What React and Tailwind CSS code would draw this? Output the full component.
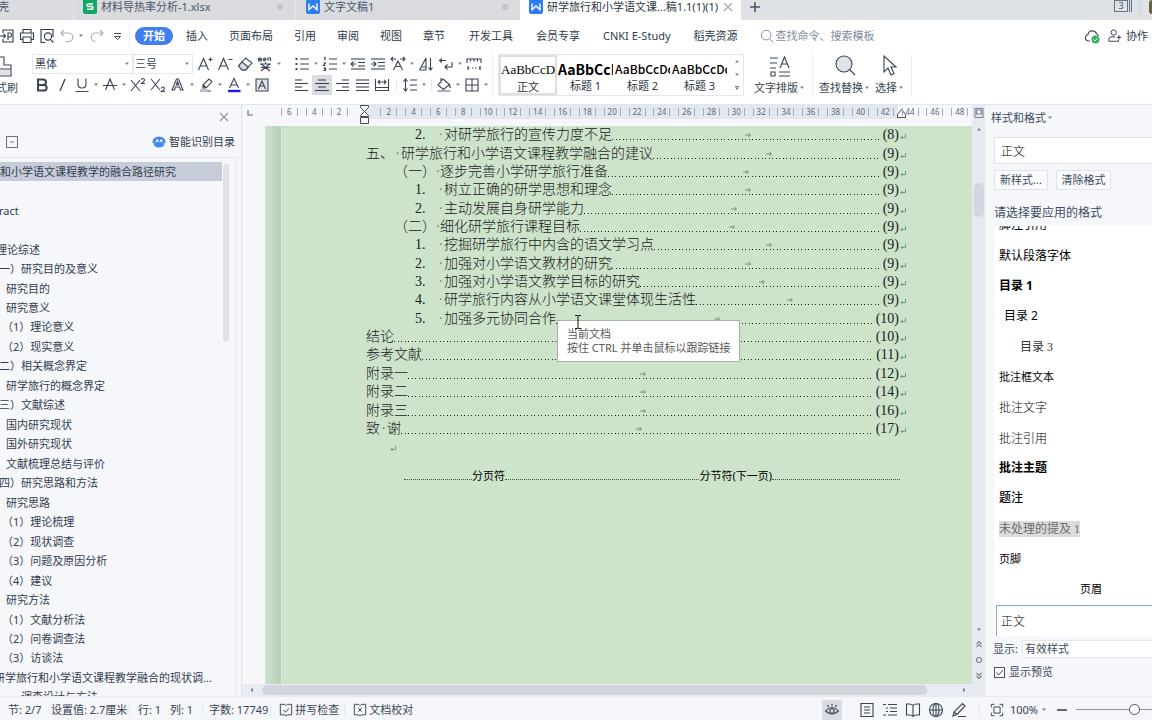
import React, { useState } from 'react';

const menus = ['插入', '页面布局', '引用', '审阅', '视图', '章节'];
const extraMenus = ['开发工具', '会员专享', 'CNKI E-Study', '稻壳资源'];

const outline = [
    { text: '行和小学语文课程教学的融合路径研究', indent: '-ml-[11px]', active: true },
    { text: '', indent: '' },
    { text: 'ract', indent: '-ml-px' },
    { text: '', indent: '' },
    { text: '理论综述', indent: '-ml-1' },
    { text: '一）研究目的及意义', indent: '-ml-px' },
    { text: '研究目的', indent: 'ml-1.5' },
    { text: '研究意义', indent: 'ml-1.5' },
    { text: '（1）理论意义', indent: 'ml-0.5' },
    { text: '（2）现实意义', indent: 'ml-0.5' },
    { text: '二）相关概念界定', indent: '-ml-px' },
    { text: '研学旅行的概念界定', indent: 'ml-1.5' },
    { text: '三）文献综述', indent: '-ml-px' },
    { text: '国内研究现状', indent: 'ml-1.5' },
    { text: '国外研究现状', indent: 'ml-1.5' },
    { text: '文献梳理总结与评价', indent: 'ml-1.5' },
    { text: '四）研究思路和方法', indent: '-ml-px' },
    { text: '研究思路', indent: 'ml-1.5' },
    { text: '（1）理论梳理', indent: 'ml-0.5' },
    { text: '（2）现状调查', indent: 'ml-0.5' },
    { text: '（3）问题及原因分析', indent: 'ml-0.5' },
    { text: '（4）建议', indent: 'ml-0.5' },
    { text: '研究方法', indent: 'ml-1.5' },
    { text: '（1）文献分析法', indent: 'ml-0.5' },
    { text: '（2）问卷调查法', indent: 'ml-0.5' },
    { text: '（3）访谈法', indent: 'ml-0.5' },
    { text: '研学旅行和小学语文课程教学融合的现状调...', indent: '-ml-1.5' },
    { text: '、调查设计与方法', indent: 'ml-2.5' },
];

const toc = [
    { level: 2, num: '2.', text: '对研学旅行的宣传力度不足', page: 8 },
    { level: 0, num: '五、', text: '研学旅行和小学语文课程教学融合的建议', page: 9 },
    { level: 1, num: '（一）', text: '逐步完善小学研学旅行准备', page: 9 },
    { level: 2, num: '1.', text: '树立正确的研学思想和理念', page: 9 },
    { level: 2, num: '2.', text: '主动发展自身研学能力', page: 9 },
    { level: 1, num: '（二）', text: '细化研学旅行课程目标', page: 9 },
    { level: 2, num: '1.', text: '挖掘研学旅行中内含的语文学习点', page: 9 },
    { level: 2, num: '2.', text: '加强对小学语文教材的研究', page: 9 },
    { level: 2, num: '3.', text: '加强对小学语文教学目标的研究', page: 9 },
    { level: 2, num: '4.', text: '研学旅行内容从小学语文课堂体现生活性', page: 9 },
    { level: 2, num: '5.', text: '加强多元协同合作', page: 10 },
    { level: 0, text: '结论', page: 10 },
    { level: 0, text: '参考文献', page: 11 },
    { level: 0, text: '附录一', page: 12 },
    { level: 0, text: '附录二', page: 14 },
    { level: 0, text: '附录三', page: 16 },
    { level: 0, num: '致', text: '谢', page: 17 },
];

const levelIndent = ['', 'pl-7', 'pl-[49px]'];
const levelNum = ['', '', 'w-[22px]'];
const levelDot = ['w-[7px]', 'w-1', 'w-[7px]'];

const styles = [
    { name: '脚注引用', look: 'ml-[5px] text-xs' },
    { name: '默认段落字体', look: 'ml-[5px] text-xs' },
    { name: '目录 1', look: 'ml-[5px] text-xs font-bold' },
    { name: '目录 2', look: 'ml-2.5 text-xs' },
    { name: '目录 3', look: "ml-[26px] text-xs text-[#333] font-['Liberation_Serif','Noto_Sans_CJK_SC',serif]" },
    { name: '批注框文本', look: 'ml-[5px] text-[11px]' },
    { name: '批注文字', look: "ml-[5px] text-xs font-light font-['Noto_Sans_CJK_SC',sans-serif]" },
    { name: '批注引用', look: "ml-[5px] text-xs font-light font-['Noto_Sans_CJK_SC',sans-serif]" },
    { name: '批注主题', look: 'ml-[5px] text-xs font-bold' },
    { name: '题注', look: 'ml-[5px] text-xs font-medium' },
    { name: '未处理的提及 1', look: "ml-[5px] text-xs text-[#6b6b6b] bg-[#dcdcdc] font-['Liberation_Serif','Noto_Sans_CJK_SC',serif]" },
    { name: '页脚', look: 'ml-[5px] text-[11px]' },
    { name: '页眉', look: 'ml-[86px] text-[11px]' },
];

const rulerMarks = [6, 4, 2, 0];
for (let i = 2; i <= 48; i += 2) {
    rulerMarks.push(i);
}

const Svg = ({ children, className = 'size-4', box = '0 0 16 16' }) => (
    <svg className={`${className} shrink-0`} viewBox={box} fill="none" stroke="currentColor" strokeWidth="1.1" aria-hidden="true">{children}</svg>
);

const Caret = () => (
    <svg className="w-2 h-1 shrink-0" viewBox="0 0 8 4" fill="#7a828f" aria-hidden="true"><path d="M2 0.5h4L4 3z" /></svg>
);

const Tool = ({ label, children, caret, active }) => (
    <button aria-label={label} title={label} className="flex items-center h-5">
        <span className={active ? 'flex w-5 h-5 items-center justify-center bg-[#d9dde3]' : 'flex w-5 h-5 items-center justify-center'}>
            <Svg>{children}</Svg>
        </span>
        {caret && <Caret />}
    </button>
);

const WLogo = () => (
    <svg className="size-3.5 shrink-0" viewBox="0 0 14 14" aria-hidden="true">
        <path d="M0 0h14v12.5L12.5 14H1.5L0 12.5z" fill="#2f7df0" />
        <path d="M3 3.5v6.2L7 6l4 3.700V3.500" fill="none" stroke="#fff" strokeWidth="1.400" />
    </svg>
);

const Sep = () => <span className="w-px h-3 bg-[#e3e6ea]" />;

const TabBar = () => (
    <div className="flex h-5 bg-[#dfe2e4] text-[#4b5568] leading-[14px] shrink-0">
        <button className="w-[74px] pb-1 text-left bg-[#d9dbdf] border-r border-[#e6e8eb] flex items-start overflow-hidden"><span className="-ml-0.5">壳</span></button>
        <button className="w-[222px] pl-[9px] pr-3 flex items-start bg-[#d9dbdf] border-r border-[#e6e8eb]">
            <svg className="size-3.5 shrink-0" viewBox="0 0 14 14" aria-hidden="true">
                <path d="M0 0h14v12.500L12.500 14H1.500L0 12.500z" fill="#13a765" />
                <path d="M10 4H5.200Q4 4 4 5.200T5.200 6.500H9Q10 6.500 10 7.700T9 9.300H4" fill="none" stroke="#fff" strokeWidth="1.500" />
            </svg>
            <span className="ml-1">材料导热率分析-1.xlsx</span>
            <span className="ml-auto mt-1 size-1.5 rounded-full bg-[#bfc3ca]" />
        </button>
        <button className="w-[224px] pl-[10px] pr-3 flex items-start bg-[#d9dbdf]">
            <WLogo />
            <span className="ml-1">文字文稿1</span>
            <span className="ml-auto mt-1 size-1.5 rounded-full bg-[#bfc3ca]" />
        </button>
        <div className="w-[221px] pl-[9px] pr-2 flex items-start bg-white text-[#2c3645]">
            <WLogo />
            <span className="ml-1 whitespace-nowrap">研学旅行和小学语文课...稿1.1(1)(1)</span>
            <button aria-label="关闭标签" className="ml-auto mt-0.5 text-[#a3a8b0]">
                <Svg className="size-2.5" box="0 0 10 10"><path d="M1 1l8 8M9 1L1 9" /></Svg>
            </button>
        </div>
        <button aria-label="新建标签" className="ml-2 h-3.5 text-[#4b5670]">
            <Svg className="size-3" box="0 0 12 12"><path d="M6 1v10M1 6h10" strokeWidth="1.600" /></Svg>
        </button>
        <div className="ml-auto flex h-4 items-start overflow-hidden">
            <span className="w-3.5 h-3 border border-[#66708a] text-[9px] leading-[10px] text-center">3</span>
            <span className="w-0.5 h-3 border-r border-[#66708a]" />
            <span className="w-0.5 h-3 border-r border-[#66708a]" />
            <span className="ml-2 w-px h-4 bg-[#cfd2d6]" />
            <span className="ml-2 w-[3px] h-3.5 rounded-l-full bg-[#6a6248]" />
        </div>
    </div>
);

const MenuRow = () => (
    <div className="flex h-8 items-center text-[#2f3a4a]">
        <button aria-label="输出" className="w-[17px]">
            <Svg className="size-3.5" box="0 0 14 14"><path d="M3 4V1h10v12H3v-3M0 7h5M3.500 5l2 2-2 2M8 11V4h2q1.500 0 1.500 2T10 8H8" /></Svg>
        </button>
        <Tool label="打印"><path d="M4 5V1.500h8V5M4 11.500H1.500V5h13v6.500H12M4 9h8v5.500H4zM12 7h1" /></Tool>
        <Tool label="打印预览"><path d="M6 14.500H2v-13h12V9M14.500 14.500l-2.600-2.600" /><circle cx="9" cy="8.500" r="3.600" /></Tool>
        <button aria-label="撤销" className="flex items-center w-7 ml-0.5 text-[#a9afb8]">
            <Svg><path d="M5 2L2 5l3 3M2 5h7.500a4.200 4.200 0 010 8.500H6" /></Svg>
            <span className="ml-0.5 flex"><Caret /></span>
        </button>
        <button aria-label="恢复" className="flex w-5 justify-center text-[#a9afb8]">
            <Svg><path d="M11 2l3 3-3 3M14 5H6.500a4.200 4.200 0 000 8.500" /></Svg>
        </button>
        <Tool label="更多"><path d="M5 5.500h7M5.500 8.500h6l-3 3z" strokeWidth=".9" /></Tool>
        <span className="ml-0.5 w-px h-5 bg-[#e8eaed]" />
        <button className="ml-[5px] w-[38px] h-[18px] rounded-full bg-[#417ff0] text-white font-bold leading-[18px]">开始</button>
        <div className="ml-[13px] flex gap-[21px]">
            {menus.map(menu => <button key={menu}>{menu}</button>)}
        </div>
        <div className="ml-6 flex gap-[23px]">
            {extraMenus.map(menu => <button key={menu}>{menu}</button>)}
        </div>
        <label className="ml-[22px] flex flex-1 items-center gap-0.5 text-[#838ba0]">
            <Svg className="size-3.5"><circle cx="7" cy="7" r="5.500" /><path d="M11 11l4 4" /></Svg>
            <input aria-label="查找命令" className="w-40 outline-none placeholder:text-[#838ba0]" placeholder="查找命令、搜索模板" />
        </label>
        <button aria-label="已同步" className="mr-2">
            <svg className="size-4" viewBox="0 0 16 16" fill="none" aria-hidden="true">
                <path d="M6 13H4.500a3.300 3.300 0 01-.5-6.500 4.500 4.500 0 018.700-.5 3 3 0 011.800 2" stroke="#4a5463" strokeWidth="1.200" />
                <circle cx="11.500" cy="11.500" r="4" fill="#35b558" />
                <path d="M9.500 11.500l1.500 1.500 2.500-2.700" stroke="#fff" />
            </svg>
        </button>
        <button className="flex items-center gap-1 pr-1">
            <Svg className="size-3.5"><circle cx="6.500" cy="4" r="3" /><path d="M12 12.500V14H1v-2.500q0-2.500 2.500-2.500H8M12.500 7v5M10 9.500h5" /></Svg>
            <span>协作</span>
        </button>
    </div>
);

const lines = (rows) => rows.map(([x, y, w]) => <path key={y} d={`M${x} ${y}h${w}`} />);

const BigTool = ({ label, children }) => (
    <button className="flex flex-col items-center gap-0.5">
        <Svg className="size-6" box="0 0 24 24">{children}</Svg>
        <span className="flex items-center whitespace-nowrap">{label}<Caret /></span>
    </button>
);

const Gallery = () => (
    <div className="ml-[5px] flex w-[246px] h-[42px] border border-[#e4e6e9] text-black">
        {[
            ['正文', "text-[13px] font-['Liberation_Serif',serif]", true],
            ['标题 1', "text-[14px] font-bold font-['Noto_Sans_CJK_SC',sans-serif]", false],
            ['标题 2', "text-xs font-medium font-['Noto_Sans_CJK_SC',sans-serif]", false],
            ['标题 3', "text-xs font-medium font-['Noto_Sans_CJK_SC',sans-serif]", false],
        ].map(([name, look, on]) => (
            <button key={name} className={on ? 'w-[58px] border-2 border-[#dcdfe3] overflow-hidden' : 'w-[57px] border border-transparent overflow-hidden'}>
                <span className={`${look} block h-[22px] leading-[26px] whitespace-nowrap text-left`}>AaBbCcDd</span>
                <span className="block leading-4 text-[#2c3645]">{name}</span>
            </button>
        ))}
        <div className="ml-auto w-3 flex flex-col justify-between items-center py-1">
            <button aria-label="上一行" className="rotate-180"><Caret /></button>
            <button aria-label="下一行"><Caret /></button>
            <button aria-label="更多样式" className="flex flex-col"><span className="mx-0.5 h-px bg-[#7a828f]" /><Caret /></button>
        </div>
    </div>
);

const Ribbon = () => (
    <div className="flex h-[52px] pt-[2px] text-[#3a4454]">
        <button className="w-[32px] flex flex-col items-start gap-0.5 overflow-hidden">
            <Svg className="w-3 h-6" box="0 0 12 24"><path d="M0 3h4v8h7v4H0M11 15v7H0" /><path d="M0 16h10v5H0z" fill="#dfe2e7" stroke="none" /></Svg>
            <span className="-ml-1 whitespace-nowrap">式刷</span>
        </button>
        <div className="flex flex-col gap-px">
            <div className="flex items-center">
                <select aria-label="字体" className="appearance-none w-[101px] h-5 px-0.5 border border-[#e6e8eb] outline-none"><option>黑体</option></select>
                <span className="-ml-2.5 mr-0.5 flex"><Caret /></span>
                <select aria-label="字号" className="appearance-none w-[60px] h-5 px-px border border-[#e6e8eb] outline-none"><option>三号</option></select>
                <span className="-ml-2.5 mr-1 flex"><Caret /></span>
                <Tool label="增大字号"><path d="M1.500 14L6.500 2.500l5 11.500M3.200 10h6.600M11.500 3.500h4M13.500 1.500v4" /></Tool>
                <Tool label="减小字号"><path d="M1.500 14L6.500 2.500l5 11.500M3.200 10h6.600M11.500 3.500h4" /></Tool>
                <Tool label="清除格式"><path d="M8.500 2L15 7l-6.500 7H5L1.500 10z" /><path d="M5 6l6.300 5L8.500 14H5L1.500 10z" fill="#d5d9df" /></Tool>
                <Tool label="拼音指南" caret><path d="M1 2l1 3 1-3 1 3 1-3M6.500 3.500h2.500Q9 2 7.800 2T6.500 3.500 8 5h1M11 5V2h2.500v3M3 8h11M8.500 6.500V8M4 8l9 7M13 8l-9 7M4 11.500h9" /></Tool>
            </div>
            <div className="flex items-center">
                <Tool label="加粗"><path d="M4 2.500h5q3 0 3 2.700T9 8H4zM4 8h5.500q3.200 0 3.200 2.800T9.500 13.500H4z" strokeWidth="2" /></Tool>
                <Tool label="倾斜"><path d="M11 2L6 14" strokeWidth="1.300" /></Tool>
                <Tool label="下划线" caret><path d="M4 1.500V7q0 4 4 4t4-4V1.500M1.500 14.500h13" /></Tool>
                <Tool label="删除线" caret><path d="M3.500 13L8 2l4.500 11M1 8.500h14" /></Tool>
                <Tool label="上标"><path d="M1 3l9 11M10 3L1 14M11.500 3q0-1.500 1.500-1.500t1.500 1.500q0 1-3 3.500h3.500" /></Tool>
                <Tool label="下标"><path d="M1 2l9 11M10 2L1 13M11.500 11.500q0-1.500 1.500-1.500t1.500 1.500q0 1-3 3h3.500" /></Tool>
                <Tool label="文字效果" caret><path d="M2 13L6.500 2h2L13 13h-2.500l-1-3h-4l-1 3zM6.300 8h2.500L7.500 4.500z" /></Tool>
                <Tool label="突出显示" caret><path d="M5 8l6-6 3 2.500-5.500 6L5 11zM5 8l4 3M2 14h11" /><path d="M2 12h8v2.500H2z" fill="#bfc4cb" stroke="none" /></Tool>
                <Tool label="字体颜色" caret><path d="M3.500 11L8 1.500 12.500 11M5.200 8h5.600" /><path d="M2 14h12.500" stroke="#1a1ae6" strokeWidth="2.400" /></Tool>
                <Tool label="字符底纹"><path d="M2 2h12v12H2z" fill="#dfe2e7" /><path d="M4.500 12L8 4l3.500 8M6 9h4" /></Tool>
            </div>
        </div>
        <div className="ml-[9px] flex flex-col gap-px">
            <div className="flex items-center">
                <Tool label="项目符号" caret><path d="M6 3h9M6 8h9M6 13h9" /><path d="M1.500 3h2M1.500 8h2M1.500 13h2" strokeWidth="2" /></Tool>
                <Tool label="编号" caret><path d="M7 3h8M7 8h8M7 13h8M2 2l1-.5V4.500M1.500 7h2l-2 2.500h2M1.500 12h2v2.500h-2M2 13h1.500" /></Tool>
                <Tool label="减少缩进">{lines([[1, 3, 14], [8, 6.5, 7], [8, 10, 7], [1, 13, 14]])}<path d="M6 8H1M3.500 5.500L1 8l2.500 2.500" /></Tool>
                <Tool label="增加缩进">{lines([[1, 3, 14], [8, 6.5, 7], [8, 10, 7], [1, 13, 14]])}<path d="M1 8h5M3.500 5.500L6 8l-2.500 2.500" /></Tool>
                <Tool label="字符缩放" caret><path d="M3.500 14L8 5l4.500 9M5.500 10.500h5M1 3h5M10 3h5M3 1L1 3l2 2M13 1l2 2-2 2" /></Tool>
                <Tool label="排序"><path d="M1.500 14L8 2v12M3 11h5M1.500 14H8M12.500 2v12M10.500 11.500l2 2.500 2-2.500" /></Tool>
                <Tool label="显示标记" caret><path d="M14 6v5H7M9.500 8.500L7 11l2.500 2.500M8 4.500H2M4 2.500l-2.500 2 2.500 2" /></Tool>
                <Tool label="制表位"><path d="M1 7V3h14v4M4.500 3v2.500M8 3v2.500M11.500 3v2.500" /><path d="M1.500 12h2M6 12h1.500M9 12h1.500M13 12h2M2 10v4M14 10v4" /></Tool>
            </div>
            <div className="flex items-center">
                <Tool label="左对齐">{lines([[1, 3, 7], [1, 6.5, 13], [1, 10, 7], [1, 13.5, 13]])}</Tool>
                <Tool label="居中" active>{lines([[4, 3, 8], [1, 6.5, 14], [4, 10, 8], [1, 13.5, 14]])}</Tool>
                <Tool label="右对齐">{lines([[8, 3, 7], [2, 6.5, 13], [8, 10, 7], [2, 13.5, 13]])}</Tool>
                <Tool label="两端对齐">{lines([[2, 3, 13], [2, 6.5, 13], [2, 10, 13], [2, 13.5, 13]])}</Tool>
                <Tool label="分散对齐"><path d="M1.500 2v12M14.500 2v12M1.500 10.500h13M1.500 13.500h13M4 5h8M6 3L4 5l2 2M10 3l2 2-2 2" /></Tool>
                <span className="w-2 flex justify-center"><Sep /></span>
                <Tool label="行距" caret><path d="M3.500 2v12M1.500 4.500L3.500 2l2 2.500M1.500 11.500l2 2.500 2-2.500M8 3h7M8 8h7M8 13h7" /></Tool>
                <span className="w-1.5 flex justify-center"><Sep /></span>
                <Tool label="底纹颜色" caret><path d="M7 2l6.500 5.500-6 5L2 8zM5 1v5M13.500 8l1 3" /><path d="M1.500 14h13" strokeWidth="2" stroke="#aab0b8" /></Tool>
                <Tool label="边框" caret><path d="M2 2h12v12H2zM8 2v12M2 8h12" /></Tool>
            </div>
        </div>
        <span className="ml-0.5 w-px h-11 bg-[#eceef0]" />
        <Gallery />
        <div className="ml-2.5 flex items-start">
            <BigTool label="文字排版"><path d="M2 4h8M2 9h7M2 14h6M3 18h4v4H3zM11 18h11M11 22h11M12 14l4.500-11L21 14M13.500 10h6" /></BigTool>
            <span className="mx-1.5 w-px h-11 bg-[#eceef0]" />
            <BigTool label="查找替换"><circle cx="11" cy="10" r="8" fill="#dfe2e7" /><path d="M17 16l5 5" /></BigTool>
            <span className="w-1" />
            <BigTool label="选择"><path d="M6 2v16l4-4 3 7 3-1.500-3-6.500h5z" /></BigTool>
            <span className="ml-1.5 w-px h-11 bg-[#eceef0]" />
        </div>
    </div>
);

const OutlinePanel = () => (
    <aside className="w-[242px] shrink-0 flex flex-col bg-[#f5f7fa] border-r border-[#e0e3e8] text-[#333d4e]">
        <div className="flex h-6 items-center justify-end pr-3">
            <button aria-label="关闭目录" className="text-[#8d949f]"><Svg className="size-2.5" box="0 0 10 10"><path d="M1 1l8 8M9 1L1 9" /></Svg></button>
        </div>
        <div className="flex h-7 items-center justify-between pl-1.5 pr-1.5 mb-px -mt-px">
            <button aria-label="折叠" className="text-[#6b7482]"><Svg className="size-3" box="0 0 12 12"><path d="M.5.500h11v11H.500zM4 6h4" /></Svg></button>
            <button className="flex items-center gap-[3px]">
                <svg className="size-3.5" viewBox="0 0 14 14" aria-hidden="true"><ellipse cx="7" cy="7" rx="6.500" ry="5.500" fill="#3f8bf0" /><path d="M4 7l1.200-2L6.500 7M8 7l1.200-2L10.500 7M0 9h2.500M11.500 9H14" stroke="#fff" strokeWidth="1.200" fill="none" /></svg>
                智能识别目录
            </button>
        </div>
        <div className="flex-1 min-h-0 mr-1 pt-1 border-t border-r border-[#e6e8ec] flex items-start overflow-hidden">
            <ul className="w-[222px] h-[545px] shrink-0 flex flex-col">
                {outline.map((item, index) => (
                    <li key={index} className={item.active ? 'flex-1 flex items-center overflow-hidden bg-[#c6ccd8]' : 'flex-1 flex items-center'}>
                        <span className={`${item.indent} whitespace-nowrap`}>{item.text}</span>
                    </li>
                ))}
            </ul>
            <span className="ml-px mt-0.5 w-1.5 h-[178px] rounded-full bg-[#e0e2e6]" />
        </div>
    </aside>
);

const Ruler = () => (
    <div className="flex h-[14px] shrink-0 bg-[#f5f7fa] text-[8px] text-[#5f6878]">
        <Svg className="ml-1 mr-[23px] mt-1 size-2" box="0 0 8 8"><path d="M2 1v5h5" /></Svg>
        {rulerMarks.map((mark, index) => {
            if (mark === 0) {
                return (
                    <span key={index} className="relative flex-1 bg-linear-to-r from-transparent from-50% to-[#e3e7ee] to-50%">
                        <svg className="absolute left-1/2 -ml-1 top-0 w-[9px] h-[19px]" viewBox="0 0 9 19" fill="#fff" stroke="#444c58" aria-hidden="true"><path d="M.5.500h8v2l-4 4-4-4zM4.500 6.500l4 4v1h-8v-1zM.5 12.500h8v6h-8z" /></svg>
                    </span>
                );
            }
            const inside = index > 3 && index < 25;
            return (
                <span key={index} className={inside ? 'relative flex-1 flex items-center justify-center bg-[#e3e7ee]' : 'relative flex-1 flex items-center justify-center'}>
                    <span className="w-[17px] h-2 border-x border-[#a4abb8] text-center leading-2">{mark}</span>
                    {index === 24 && (
                        <svg className="absolute -right-2 top-1 w-[9px] h-2.5" viewBox="0 0 9 10" fill="#fff" stroke="#444c58" aria-hidden="true"><path d="M4.500.500l4 5v3h-8v-3z" /></svg>
                    )}
                </span>
            );
        })}
    </div>
);

const ReturnMark = ({ className }) => (
    <svg className={`${className} size-1.5 shrink-0`} viewBox="0 0 6 6" fill="none" stroke="#6f8a78" strokeWidth=".9" aria-hidden="true"><path d="M5.500 0v3.500H1M2.500 2L1 3.500 2.500 5" /></svg>
);

const TocLine = ({ item }) => (
    <li className={`${levelIndent[item.level]} flex-1 min-h-0 flex items-center`}>
        {item.num && <span className={levelNum[item.level]}>{item.num}</span>}
        {item.num && <span className={`${levelDot[item.level]} flex justify-center text-[#6d8570]`}>·</span>}
        <a href="#toc" className="whitespace-nowrap">{item.text}</a>
        <span className="relative flex-1 min-w-0 h-[18px] flex items-end pb-1">
            <span className="flex-1 h-px bg-[repeating-linear-gradient(to_right,#1f2b21_0_1px,transparent_1px_4px,#1f2b21_4px_5px,transparent_5px_7px)]" />
            <svg className="absolute left-1/2 top-1.5 w-1.5 h-1.5" viewBox="0 0 6 6" fill="none" stroke="#5f7a68" strokeWidth=".8" aria-hidden="true"><path d="M0 3h5M3.500 1L5.500 3l-2 2" /></svg>
        </span>
        <span className="ml-1">({item.page})</span>
        <ReturnMark className="ml-px mt-1" />
    </li>
);

const DocumentPage = () => (
    <div className="flex-1 min-h-0 flex pl-[23px] mt-[7px]">
        <span className="w-[17px] bg-linear-to-r from-[#cde2cf] to-[#b5cfb8] border-r border-[#d9ebd8]" />
        <main className="relative flex-1 pl-[84px] pr-[66px] bg-[#cde3ca] text-[#18201a] overflow-hidden">
            <ul className="h-78 flex flex-col text-sm leading-[18px] font-light font-['Liberation_Serif','Noto_Sans_CJK_SC',serif]">
                {toc.map((item, index) => <TocLine key={index} item={item} />)}
            </ul>
            <ReturnMark className="ml-6 mt-2" />
            <div className="mt-4 pl-[38px] pr-1.5 flex items-end leading-4 text-black">
                <span className="w-17 mb-1 border-b border-dotted border-[#4a564c]" />
                <span>分页符</span>
                <span className="flex-1 mb-1 border-b border-dotted border-[#4a564c]" />
                <span>分节符(下一页)</span>
                <span className="w-32 mb-1 border-b border-dotted border-[#4a564c]" />
            </div>
            <div role="tooltip" className="absolute left-[275px] top-[194px] px-[9px] py-1.5 bg-white border border-[#a9b0aa] text-[#5a5a5a] leading-[14px] whitespace-nowrap">
                当前文档<br />按住 CTRL 并单击鼠标以跟踪链接
            </div>
            <svg className="absolute left-[292px] top-[189px] w-2 h-3.5" viewBox="0 0 8 14" fill="none" stroke="#111" aria-hidden="true"><path d="M1 .5h2.500l.5.500.5-.5H7M4 1v12M1 13.500h2.500l.5-.5.5.500H7" /></svg>
        </main>
    </div>
);

const Editor = () => (
    <section className="flex-1 min-w-0 flex">
        <div className="flex-1 min-w-0 flex flex-col bg-[#f5f7fa]">
            <Ruler />
            <DocumentPage />
            <div className="flex h-3 items-center pl-1.5 pr-1 bg-[#e8ebf1] text-[#7c8492]">
                <Svg className="size-2" box="0 0 8 8"><path d="M5 1.500v5L2.500 4z" fill="currentColor" stroke="none" /></Svg>
                <span className="ml-1.5 mr-[33px] flex-1 h-2.5 rounded-full bg-[#d1d5dc]" />
                <Svg className="size-2" box="0 0 8 8"><path d="M3 1.500v5L5.500 4z" fill="currentColor" stroke="none" /></Svg>
            </div>
        </div>
        <div className="w-[13px] flex flex-col items-center bg-[#e6e9f0] text-[#7c8492]">
            <Svg className="mt-0.5 size-3" box="0 0 12 12"><path d="M2 1.500h8v9H2zM3.500 3h5v4h-5z" /></Svg>
            <span className="mt-2 rotate-180 flex"><Caret /></span>
            <span className="mt-[52px] w-2.5 h-[34px] rounded-full bg-[#d2d6de]" />
            <div className="mt-auto mb-4 flex flex-col items-center gap-2">
                <Caret />
                <Svg className="size-2" box="0 0 8 8"><path d="M1.500 4L4 1.500 6.500 4M1.500 7L4 4.500 6.500 7" /></Svg>
                <Svg className="size-2" box="0 0 8 8"><circle cx="4" cy="4" r="2.500" /></Svg>
                <Svg className="size-2" box="0 0 8 8"><path d="M1.500 1L4 3.500 6.500 1M1.500 4L4 6.500 6.500 4" /></Svg>
            </div>
        </div>
    </section>
);

const StylePanel = () => {
    const [preview, setPreview] = useState(true);

    return (
        <aside className="w-[167px] shrink-0 flex flex-col pl-[9px] bg-[#f5f7fa] text-[#3d4a60]">
            <button className="-ml-[3px] pt-1 h-8 flex items-start leading-[18px]"><span>样式和格式</span><span className="mt-[7px]"><Caret /></span></button>
            <input aria-label="当前样式" defaultValue="正文" className="h-[27px] shrink-0 w-full px-1.5 bg-white border border-r-0 border-[#dfe2e6] text-xs text-black font-light font-['Noto_Sans_CJK_SC',sans-serif] outline-none" />
            <div className="mt-1.5 flex gap-2">
                <button className="w-[54px] h-5 border border-[#dfe2e6] bg-[#fafbfc]">新样式...</button>
                <button className="w-[55px] h-5 border border-[#dfe2e6] bg-[#fafbfc]">清除格式</button>
            </div>
            <h2 className="mt-3.5 mb-1 text-xs leading-[18px]">请选择要应用的格式</h2>
            <div className="flex-1 min-h-0 flex flex-col justify-end overflow-hidden bg-white text-black">
                <ul className="h-[426px] shrink-0 flex flex-col">
                    {styles.map(style => (
                        <li key={style.name} className="flex-1 flex items-center">
                            <span className={`${style.look} leading-4 whitespace-nowrap`}>{style.name}</span>
                        </li>
                    ))}
                    <li className="flex-1 flex items-center ml-0.5 pl-1 border-t border-l border-[#7fa6cc] text-xs font-light font-['Noto_Sans_CJK_SC',sans-serif]">正文</li>
                </ul>
            </div>
            <div className="mt-1 flex items-center gap-1">
                <label htmlFor="show" className="-ml-px whitespace-nowrap">显示:</label>
                <select id="show" className="appearance-none flex-1 h-[18px] px-0.5 bg-white border border-r-0 border-[#e3e6ea] leading-4 outline-none"><option>有效样式</option></select>
            </div>
            <label className="mt-1.5 mb-4 flex h-4 items-center gap-1">
                <span className="relative flex">
                    <input type="checkbox" checked={preview} onChange={(e) => setPreview(e.target.checked)} className="appearance-none size-[11px] border border-[#4a5463] bg-white" />
                    {preview && <svg className="absolute inset-0 size-[11px] pointer-events-none" viewBox="0 0 11 11" fill="none" stroke="#3a4454" aria-hidden="true"><path d="M2.500 5.500l2 2.500L9 3" /></svg>}
                </span>
                显示预览
            </label>
        </aside>
    );
};

const StatusBar = () => {
    const [zoom, setZoom] = useState(82);

    return (
        <footer className="flex h-6 shrink-0 items-center pt-0.5 pl-2 bg-[#f4f6f9] border-t border-[#e6e9ed] text-[#3a4454] whitespace-nowrap">
            <span className="w-[43px]">节: 2/7</span>
            <span className="w-[78px]">设置值: 2.7厘米</span>
            <Sep />
            <span className="ml-2 w-8">行: 1</span>
            <span className="w-8">列: 1</span>
            <Sep />
            <span className="ml-1.5 mr-0.5">字数: 17749</span>
            <Sep />
            <button className="ml-2 flex items-center gap-0.5"><Svg className="size-3.5"><path d="M8 3L6.500 1.500h-5v12h5L8 15l1.500-1.500h5v-12h-5zM5 8l2.500 2.500L11.500 6" /></Svg>拼写检查</button>
            <span className="w-2.5 flex justify-center"><Sep /></span>
            <button className="ml-1 flex items-center gap-0.5"><Svg className="size-3.5"><path d="M8 3L6.500 1.500h-5v12h5L8 15l1.500-1.500h5v-12h-5zM6 6l4 4M10 6l-4 4" /></Svg>文档校对</button>
            <div className="ml-auto mr-1 flex items-center gap-[3px]">
                <span className="mr-3 flex"><Tool label="护眼模式" active><path d="M1.500 9Q8 2 14.500 9 8 15 1.500 9zM8 2v2M3.500 3l1 2M12.500 3l-1 2" /><circle cx="8" cy="9" r="2.200" /></Tool></span>
                <Tool label="页面视图"><path d="M2 1.500h12v13H2zM5 5h6M5 8h6M5 11h6" /></Tool>
                <Tool label="大纲视图"><path d="M1 2.500h3M6 2.500h9M4 6h2M8 6h7M4 9.500h2M8 9.500h7M1 13h3M6 13h9" /></Tool>
                <Tool label="阅读版式"><path d="M8 3.500Q7 2 4.500 2h-3v11h3q2.500 0 3.500 1.500Q9 13 11.500 13h3V2h-3Q9 2 8 3.500v11" /></Tool>
                <Tool label="网页版式"><circle cx="8" cy="8" r="6.500" /><ellipse cx="8" cy="8" rx="3" ry="6.500" /><path d="M1.500 8h13M8 1.500v13" /></Tool>
                <Tool label="写作模式"><path d="M2 14l1-4 8.500-8.500 2.500 2.500L6 12.500zM3 10l3 2.500M7 14.500h8" /></Tool>
            </div>
            <span className="mx-1.5 flex"><Sep /></span>
            <button aria-label="适合页宽" className="ml-1"><Svg className="size-3.5"><path d="M1.500 5V1.500H5M11 1.500h3.500V5M14.500 11v3.500H11M5 14.500H1.500V11M4.500 4.500h7v7h-7z" /></Svg></button>
            <button className="ml-1.5 flex items-center gap-0.5">100%<Caret /></button>
            <button aria-label="缩小" className="ml-2"><Svg className="size-3" box="0 0 12 12"><path d="M1 6h10" strokeWidth="1.600" /></Svg></button>
            <input type="range" aria-label="显示比例" value={zoom} onChange={(e) => setZoom(Number(e.target.value))} className="ml-2 w-[76px] h-3 appearance-none bg-[linear-gradient(#8d95a3,#8d95a3)] bg-size-[100%_1px] bg-center bg-no-repeat [&::-webkit-slider-thumb]:appearance-none [&::-webkit-slider-thumb]:size-[11px] [&::-webkit-slider-thumb]:rounded-full [&::-webkit-slider-thumb]:border [&::-webkit-slider-thumb]:border-[#4a5463] [&::-webkit-slider-thumb]:bg-white" />
        </footer>
    );
};

export default function App() {
    return (
        <div className="h-screen flex flex-col overflow-hidden bg-white text-[11px] leading-4 font-['Noto_Sans','Noto_Sans_CJK_SC',sans-serif]">
            <TabBar />
            <header className="shrink-0 bg-white border-b border-[#e3e6ea]">
                <MenuRow />
                <Ribbon />
            </header>
            <div className="flex-1 min-h-0 flex">
                <OutlinePanel />
                <Editor />
                <StylePanel />
            </div>
            <StatusBar />
        </div>
    );
}
